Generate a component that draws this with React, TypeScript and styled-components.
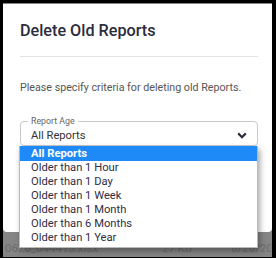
import React from "react";
import styled, { createGlobalStyle } from "styled-components";

const Global = createGlobalStyle`
  html, body { margin: 0; padding: 0; background: #000; }
  body { font-family: Roboto, "Liberation Sans", sans-serif; }
`;

const Frame = styled.div`
  width: 276px;
  height: 258px;
  box-sizing: border-box;
  padding: 3px 4px 1px 3px;
  background: #000;
`;

const Backdrop = styled.div`
  position: relative;
  height: 100%;
  background: #858585;
  display: flex;
  flex-direction: column;
  padding-top: 1px;
  box-sizing: border-box;
`;

const Dialog = styled.div`
  background: #fff;
  height: 228px;
  border-radius: 0 0 4px 4px;
  padding: 17px 14px 0 17px;
  box-sizing: border-box;
`;

const Title = styled.h2`
  margin: 0;
  font-size: 16.2px;
  line-height: 19px;
  font-weight: 500;
  color: #2c2c3c;
`;

const Divider = styled.hr`
  margin: 16px 0 0 0;
  border: none;
  border-top: 1px solid #e3e3e6;
`;

const Body = styled.p`
  margin: 24px 0 0 0;
  font-size: 10.7px;
  line-height: 13px;
  color: #555;
`;

const Field = styled.fieldset`
  margin: 23px 0 0 0;
  padding: 0 10px 0 10px;
  height: 29px;
  box-sizing: border-box;
  border: 1px solid #c9c9cc;
  border-radius: 4px;
  display: flex;
  align-items: center;
  justify-content: space-between;
`;

const Legend = styled.legend`
  padding: 0 3px;
  margin-left: -3px;
  font-size: 8.8px;
  line-height: 9px;
  color: #666;
`;

const Value = styled.span`
  font-size: 11.2px;
  color: #333;
  margin-top: -1px;
`;

const Chevron = styled.svg`
  width: 10px;
  height: 7px;
  margin-top: -1px;
`;

const List = styled.ul`
  position: absolute;
  left: 16px;
  top: 143px;
  width: 239px;
  margin: 0;
  padding: 0 0 2px 0;
  list-style: none;
  background: #fff;
  box-shadow: 2px 3px 6px rgba(0, 0, 0, 0.35);
  border: 1px solid #b9b9b9;
  border-top: none;
  box-sizing: border-box;
`;

const Item = styled.li<{ $active?: boolean }>`
  height: 14px;
  line-height: 14px;
  padding-left: 11px;
  font-size: 11.2px;
  color: ${(p) => (p.$active ? "#fff" : "#2e2e44")};
  background: ${(p) => (p.$active ? "#1e8af8" : "transparent")};
  font-weight: ${(p) => (p.$active ? 700 : 400)};
  ${(p) => (p.$active ? "height: 15px; line-height: 15px;" : "")}
`;

const Behind = styled.div`
  margin-top: auto;
  height: 14px;
  display: flex;
  align-items: center;
  padding: 0 0 2px 2px;
  font-size: 11.5px;
  color: #6c6c6c;
`;

const Cell = styled.span<{ $w: number }>`
  width: ${(p) => p.$w}px;
  white-space: nowrap;
  overflow: hidden;
`;

const options = [
  "All Reports",
  "Older than 1 Hour",
  "Older than 1 Day",
  "Older than 1 Week",
  "Older than 1 Month",
  "Older than 6 Months",
  "Older than 1 Year",
];

export default function App() {
  return (
    <>
      <Global />
      <Frame>
        <Backdrop>
          <Dialog>
            <Title>Delete Old Reports</Title>
            <Divider />
            <Body>Please specify criteria for deleting old Reports.</Body>
            <Field>
              <Legend>Report Age</Legend>
              <Value>All Reports</Value>
              <Chevron viewBox="0 0 10 7">
                <path d="M1.2 1.4 L5 5.2 L8.8 1.4" fill="none" stroke="#2c2c3c" strokeWidth="2.2" />
              </Chevron>
            </Field>
          </Dialog>
          <Behind>
            <Cell $w={157}>0620_044415.xlsx</Cell>
            <Cell $w={69}>27 KB</Cell>
            <Cell $w={40}>6/20/2023</Cell>
          </Behind>
          <List>
            {options.map((o, i) => (
              <Item key={o} $active={i === 0}>
                {o}
              </Item>
            ))}
          </List>
        </Backdrop>
      </Frame>
    </>
  );
}
